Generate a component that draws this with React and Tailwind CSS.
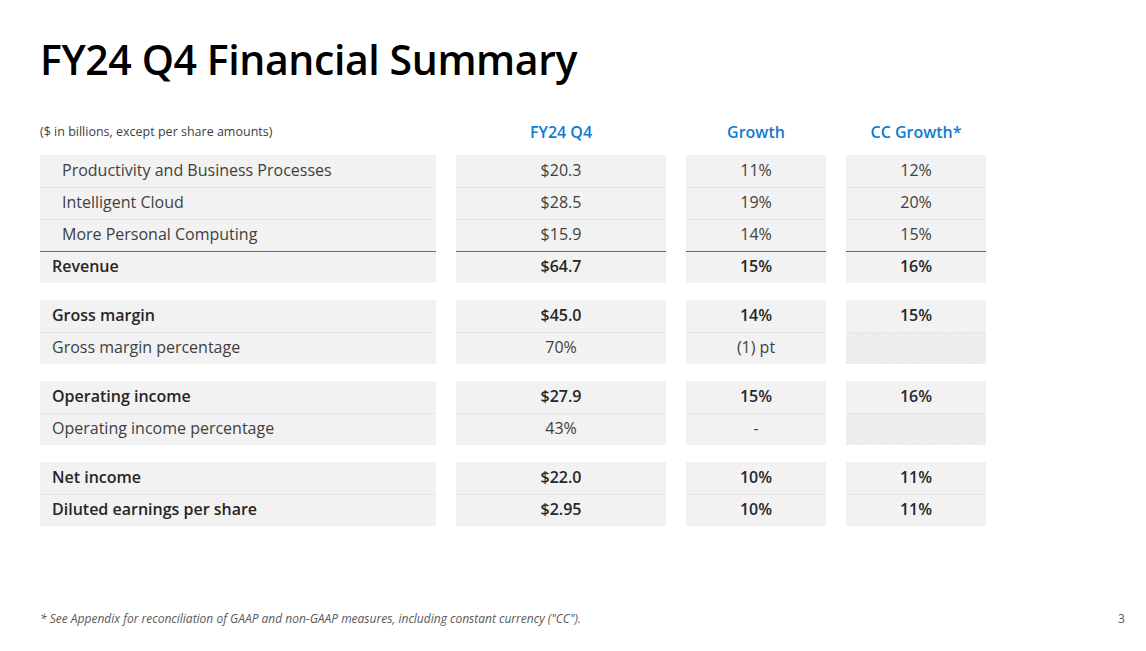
import React from "react"

const groups = [
  [
    { label: "Productivity and Business Processes", indent: true, v: "$20.3", g: "11%", cc: "12%" },
    { label: "Intelligent Cloud", indent: true, v: "$28.5", g: "19%", cc: "20%" },
    { label: "More Personal Computing", indent: true, v: "$15.9", g: "14%", cc: "15%" },
    { label: "Revenue", bold: true, rule: true, v: "$64.7", g: "15%", cc: "16%" },
  ],
  [
    { label: "Gross margin", bold: true, v: "$45.0", g: "14%", cc: "15%" },
    { label: "Gross margin percentage", v: "70%", g: "(1) pt", cc: null },
  ],
  [
    { label: "Operating income", bold: true, v: "$27.9", g: "15%", cc: "16%" },
    { label: "Operating income percentage", v: "43%", g: "-", cc: null },
  ],
  [
    { label: "Net income", bold: true, v: "$22.0", g: "10%", cc: "11%" },
    { label: "Diluted earnings per share", bold: true, v: "$2.95", g: "10%", cc: "11%" },
  ],
]

const hatch =
  "bg-[repeating-linear-gradient(135deg,#e8e8e8_0px,#e8e8e8_1px,#efefef_1px,#efefef_3px)]"

function Cell({ row, first, children, className = "", plain }) {
  const border = row.rule
    ? "border-t border-[#6b6b6b]"
    : first
    ? "border-t border-transparent"
    : "border-t border-[#e6e6e6]"
  return (
    <div
      className={`h-[32px] pb-[3px] flex items-center ${border} ${plain ? hatch : "bg-[#f2f2f2]"} ${
        row.bold ? "font-semibold text-[#262626]" : "text-[#404040]"
      } ${className}`}
    >
      {children}
    </div>
  )
}

export default function App() {
  return (
    <div
      className="w-[1146px] h-[651px] bg-white relative overflow-hidden"
      style={{ fontFamily: '"Open Sans", "Noto Sans", sans-serif' }}
    >
      <div className="pl-[40px] pt-[29px]">
        <h1 className="text-[41px] leading-[60px] font-semibold text-black tracking-[-0.4px]">
          FY24 Q4 Financial Summary
        </h1>

        {/* header */}
        <div className="grid grid-cols-[396px_210px_140px_140px] gap-x-[20px] mt-[30px] h-[26px] items-center">
          <div className="text-[12.5px] text-[#404040]">($ in billions, except per share amounts)</div>
          <div className="text-center text-[16px] font-semibold text-[#0f7bd0]">FY24 Q4</div>
          <div className="text-center text-[16px] font-semibold text-[#0f7bd0]">Growth</div>
          <div className="text-center text-[16px] font-semibold text-[#0f7bd0]">CC Growth*</div>
        </div>

        <div className="mt-[10px] flex flex-col gap-[17px]">
          {groups.map((rows, gi) => (
            <div key={gi} className="grid grid-cols-[396px_210px_140px_140px] gap-x-[20px]">
              {rows.map((row, ri) => (
                <React.Fragment key={ri}>
                  <Cell row={row} first={ri === 0} className={row.indent ? "pl-[22px]" : "pl-[12px]"}>
                    <span className="text-[16px]">{row.label}</span>
                  </Cell>
                  <Cell row={row} first={ri === 0} className="justify-center">
                    <span className="text-[16px]">{row.v}</span>
                  </Cell>
                  <Cell row={row} first={ri === 0} className="justify-center">
                    <span className="text-[16px]">{row.g}</span>
                  </Cell>
                  <Cell row={row} first={ri === 0} plain={row.cc === null} className="justify-center">
                    <span className="text-[16px]">{row.cc}</span>
                  </Cell>
                </React.Fragment>
              ))}
            </div>
          ))}
        </div>
      </div>

      <div className="absolute left-[40px] top-[610px] text-[12px] italic text-[#595959]">
        * See Appendix for reconciliation of GAAP and non-GAAP measures, including constant currency ("CC").
      </div>
      <div className="absolute left-[1118px] top-[610px] text-[12px] text-[#595959]">3</div>
    </div>
  )
}
